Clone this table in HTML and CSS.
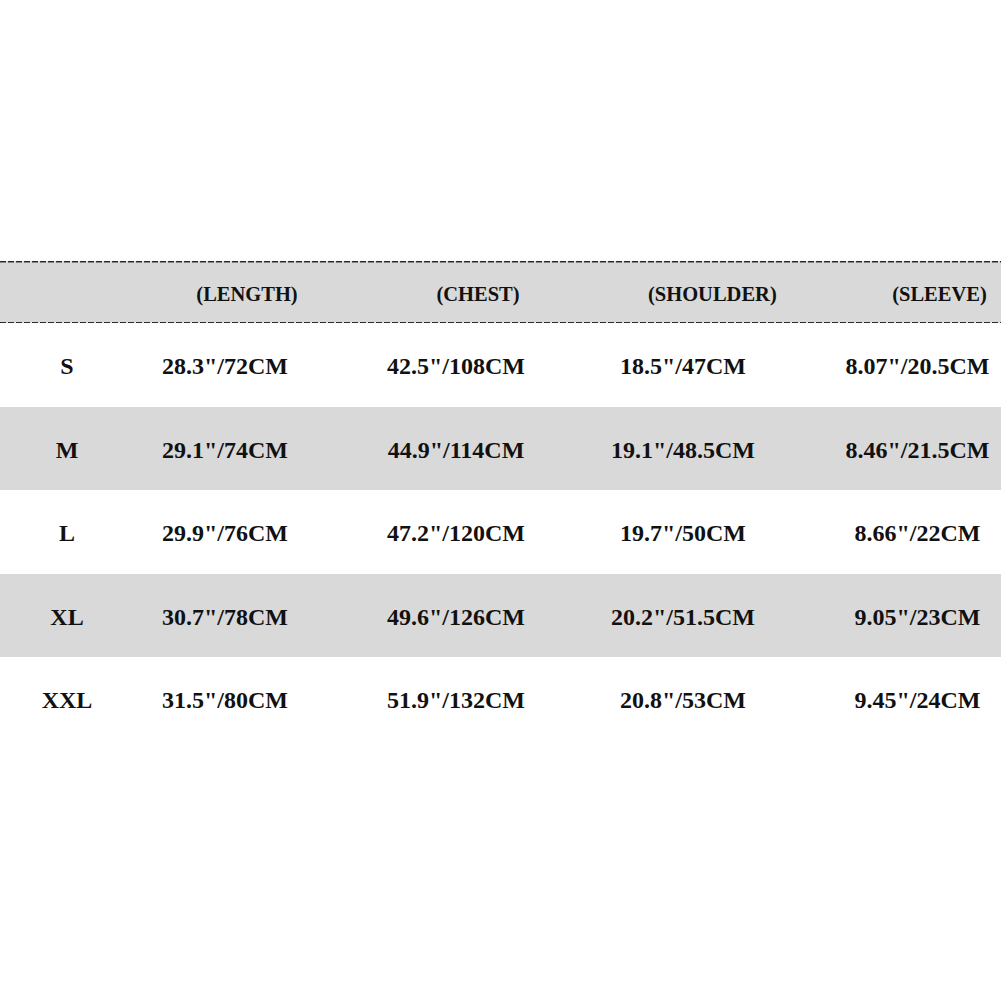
FILE: index.html
```html
<!DOCTYPE html>
<html>
<head>
<meta charset="utf-8">
<link rel="stylesheet" href="styles.css">
</head>
<body>
<div class="page">
  <div class="chart">
    <div class="row head">
      <div class="cell"></div>
      <div class="cell">(LENGTH)</div>
      <div class="cell">(CHEST)</div>
      <div class="cell shoulder">(SHOULDER)</div>
      <div class="cell last">(SLEEVE)</div>
    </div>
    <div class="row">
      <div class="cell">S</div>
      <div class="cell">28.3"/72CM</div>
      <div class="cell">42.5"/108CM</div>
      <div class="cell">18.5"/47CM</div>
      <div class="cell last">8.07"/20.5CM</div>
    </div>
    <div class="row alt">
      <div class="cell">M</div>
      <div class="cell">29.1"/74CM</div>
      <div class="cell">44.9"/114CM</div>
      <div class="cell">19.1"/48.5CM</div>
      <div class="cell last">8.46"/21.5CM</div>
    </div>
    <div class="row">
      <div class="cell">L</div>
      <div class="cell">29.9"/76CM</div>
      <div class="cell">47.2"/120CM</div>
      <div class="cell">19.7"/50CM</div>
      <div class="cell last">8.66"/22CM</div>
    </div>
    <div class="row alt">
      <div class="cell">XL</div>
      <div class="cell">30.7"/78CM</div>
      <div class="cell">49.6"/126CM</div>
      <div class="cell">20.2"/51.5CM</div>
      <div class="cell last">9.05"/23CM</div>
    </div>
    <div class="row">
      <div class="cell">XXL</div>
      <div class="cell">31.5"/80CM</div>
      <div class="cell">51.9"/132CM</div>
      <div class="cell">20.8"/53CM</div>
      <div class="cell last">9.45"/24CM</div>
    </div>
  </div>
</div>
</body>
</html>
```

FILE: styles.css
```css
html, body {
  margin: 0;
  padding: 0;
  background: #ffffff;
}

.page {
  width: 1001px;
  height: 1001px;
  padding-top: 261px;
  box-sizing: border-box;
  font-family: "Liberation Serif", "Times New Roman", serif;
  font-weight: bold;
  color: #111111;
}

.chart {
  display: flex;
  flex-direction: column;
}

.row {
  display: grid;
  grid-template-columns: 134px 182px 280px 174px 1fr;
  height: 83.5px;
  align-items: center;
  font-size: 24px;
}

.row.alt {
  background: #d9d9d9;
}

.cell {
  text-align: center;
  white-space: nowrap;
  padding-top: 4px;
}

.cell.last {
  padding-left: 64px;
}

.row.head {
  height: 62px;
  font-size: 20.5px;
  background-color: #d9d9d9;
  background-image:
    repeating-linear-gradient(90deg, #2a2a2a 0 6px, transparent 6px 8px),
    repeating-linear-gradient(90deg, #2a2a2a 0 6px, transparent 6px 8px);
  background-size: 100% 1.5px, 100% 1.5px;
  background-position: 0 0, 0 100%;
  background-repeat: no-repeat;
}

.row.head .cell {
  padding-left: 44px;
  padding-top: 4px;
}

.row.head .cell.shoulder {
  padding-left: 52px;
}

.row.head .cell.last {
  padding-left: 108px;
}
```
